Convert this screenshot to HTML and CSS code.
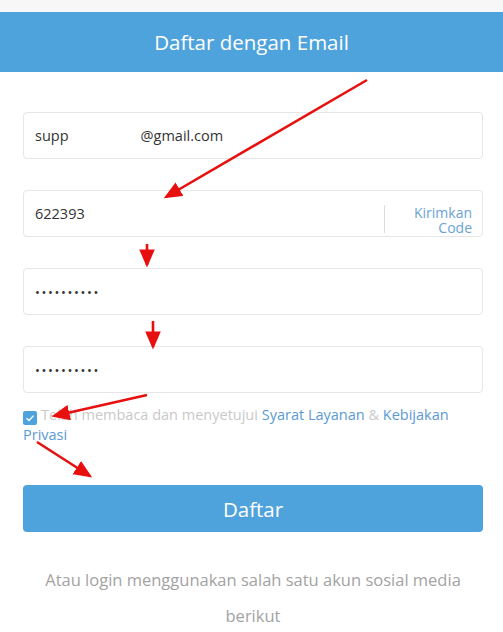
FILE: index.html
```html
<!DOCTYPE html>
<html lang="id">
<head>
  <meta charset="UTF-8">
  <meta name="viewport" content="width=device-width, initial-scale=1.0">
  <title>Daftar dengan Email</title>
  <link rel="stylesheet" href="styles.css">
</head>
<body>
  <div class="top-strip"></div>
  <header class="header">
    <h1>Daftar dengan Email</h1>
  </header>

  <form class="register-form">
    <div class="field">
      <span class="field-text">supp<span class="redacted"></span>@gmail.com</span>
    </div>
    <div class="field field-code">
      <span class="field-text">622393</span>
      <span class="divider"></span>
      <a class="send-code">Kirimkan<br>Code</a>
    </div>
    <div class="field">
      <span class="field-text dots">••••••••••</span>
    </div>
    <div class="field">
      <span class="field-text dots">••••••••••</span>
    </div>

    <div class="agree">
      <span class="checkbox">
        <svg width="10" height="8" viewBox="0 0 10 8"><path d="M1.5 4.2 L4 6.5 L8.6 1.6" fill="none" stroke="#fff" stroke-width="1.3"/></svg>
      </span>Telah membaca dan menyetujui <a>Syarat Layanan</a> &amp; <a>Kebijakan Privasi</a>
    </div>

    <button type="button" class="submit-btn">Daftar</button>

    <p class="social-note">Atau login menggunakan salah satu akun sosial media berikut</p>
  </form>

  <!-- red annotation arrows drawn over the screenshot -->
  <svg class="arrows" width="503" height="632" viewBox="0 0 503 632">
    <defs>
      <marker id="head" markerWidth="7" markerHeight="6" refX="6" refY="3" orient="auto" markerUnits="strokeWidth">
        <path d="M0 0 L7 3 L0 6 Z" fill="#e8100f"/>
      </marker>
    </defs>
    <g stroke="#e8100f" stroke-width="2.6" fill="none" marker-end="url(#head)">
      <line x1="367" y1="80" x2="166" y2="197"/>
      <line x1="147" y1="244" x2="147" y2="265"/>
      <line x1="153" y1="321" x2="153" y2="347"/>
      <line x1="147" y1="395" x2="54" y2="416"/>
      <line x1="37" y1="442" x2="90" y2="476"/>
    </g>
  </svg>
</body>
</html>
```

FILE: styles.css
```css
body {
  margin: 0;
  background: #fff;
  font-family: 'Open Sans', 'Noto Sans', Arial, sans-serif;
  color: #333;
}
.top-strip {
  height: 12px;
  background: #f7f7f7;
}
.header {
  height: 60px;
  background: #4fa3dc;
  display: flex;
  align-items: center;
  justify-content: center;
}
.header h1 {
  margin: 0;
  color: #fff;
  font-size: 20.5px;
  font-weight: 400;
}
.register-form {
  margin: 0 20px 0 23px;
  padding-top: 40px;
}
.field {
  height: 47px;
  box-sizing: border-box;
  border: 1px solid #e6e6e6;
  border-radius: 4px;
  margin-bottom: 31px;
  display: flex;
  align-items: center;
  padding: 0 10px 0 11px;
}
.field-text {
  font-size: 14.5px;
  color: #333;
  flex: 1;
}
.redacted {
  display: inline-block;
  width: 72px;
}
.dots {
  font-size: 13px;
  letter-spacing: 1.6px;
}
.divider {
  width: 1px;
  height: 28px;
  background: #dcdcdc;
  align-self: flex-end;
  margin-bottom: 3px;
}
.send-code {
  width: 87px;
  text-align: right;
  color: #6aa3d5;
  font-size: 14px;
  line-height: 14.5px;
  align-self: flex-end;
  margin-bottom: 1px;
}
.agree {
  margin-top: -19px;
  font-size: 14.5px;
  line-height: 19px;
  color: #c9c9c9;
}
.agree a {
  color: #5b9ad3;
}
.checkbox {
  display: inline-flex;
  align-items: center;
  justify-content: center;
  width: 14px;
  height: 14px;
  background: #4fa3dc;
  border-radius: 2px;
  vertical-align: -2px;
  margin-right: 4px;
}
.submit-btn {
  display: block;
  width: 100%;
  height: 47px;
  margin-top: 41px;
  border: none;
  border-radius: 4px;
  background: #4fa3dc;
  color: #fff;
  font-family: inherit;
  font-size: 20.5px;
}
.social-note {
  margin: 30px 10px 0;
  text-align: center;
  color: #a3a3a3;
  font-size: 16.5px;
  line-height: 36px;
}
.arrows {
  position: absolute;
  top: 0;
  left: 0;
  pointer-events: none;
}
```
